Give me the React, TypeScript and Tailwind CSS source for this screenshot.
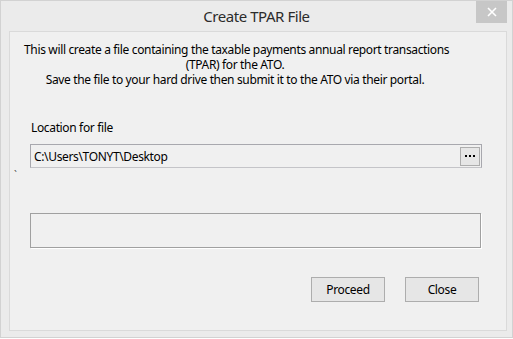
export default function App() {
  return (
    <div className="w-[513px] h-[339px] bg-white overflow-hidden" style={{ fontFamily: '"Noto Sans", "Open Sans", sans-serif' }}>
      <div className="w-[513px] h-[338px] border border-[#d2d2d2] bg-[#ebebeb] flex flex-col">
        {/* Title bar */}
        <div className="relative h-[30px] flex items-center justify-center">
          <span className="text-[15px] tracking-[-0.45px] text-[#2b2b2b] mt-[1px]">Create TPAR File</span>
          <button className="absolute right-[5px] top-0 w-[31px] h-[22px] bg-[#c7c7c7] flex items-center justify-center">
            <svg width="10" height="10" viewBox="0 0 10 10">
              <path d="M1 1 L9 9 M9 1 L1 9" stroke="#fff" strokeWidth="1.6" />
            </svg>
          </button>
        </div>

        {/* Client area */}
        <div className="ml-[8px] w-[498px] h-[300px] border border-[#dadada] bg-[#f0f0f0] flex flex-col text-[12px] tracking-[-0.35px] text-black">
          <p className="mt-[10px] ml-[14px] w-[422px] text-center leading-[15px] whitespace-nowrap">
            This will create a file containing the taxable payments annual report transactions
            <br />
            (TPAR) for the ATO.
            <br />
            Save the file to your hard drive then submit it to the ATO via their portal.
          </p>

          <div className="mt-[33px] ml-[21px] leading-[15px]">Location for file</div>

          <div className="mt-[9px] ml-[20px] w-[452px] h-[24px] border border-[#a8a8ae] border-b-[#c4c4c8] bg-[#f0f0f0] flex items-center justify-between pl-[3px] pr-[1px]">
            <span className="leading-[15px]">C:\Users\TONYT\Desktop</span>
            <button className="w-[20px] h-[19px] border border-[#adadad] bg-[#e6e6e6] flex items-center justify-center gap-[2px]">
              <span className="w-[2px] h-[2px] bg-black" />
              <span className="w-[2px] h-[2px] bg-black" />
              <span className="w-[2px] h-[2px] bg-black" />
            </button>
          </div>

          <div className="ml-[4px] mt-[2px] h-[10px] text-[10px] leading-[10px] text-[#555]">`</div>

          <div className="mt-[33px] ml-[20px] w-[451px] h-[35px] border border-[#a0a0a0] shadow-[1px_1px_0_#ffffff]" />

          <div className="mt-[29px] ml-[301px] flex gap-[20px]">
            <button className="w-[74px] h-[25px] border border-[#adadad] bg-[#e6e6e6] leading-[15px]">Proceed</button>
            <button className="w-[74px] h-[25px] border border-[#adadad] bg-[#e6e6e6] leading-[15px]">Close</button>
          </div>
        </div>
      </div>
    </div>
  );
}
